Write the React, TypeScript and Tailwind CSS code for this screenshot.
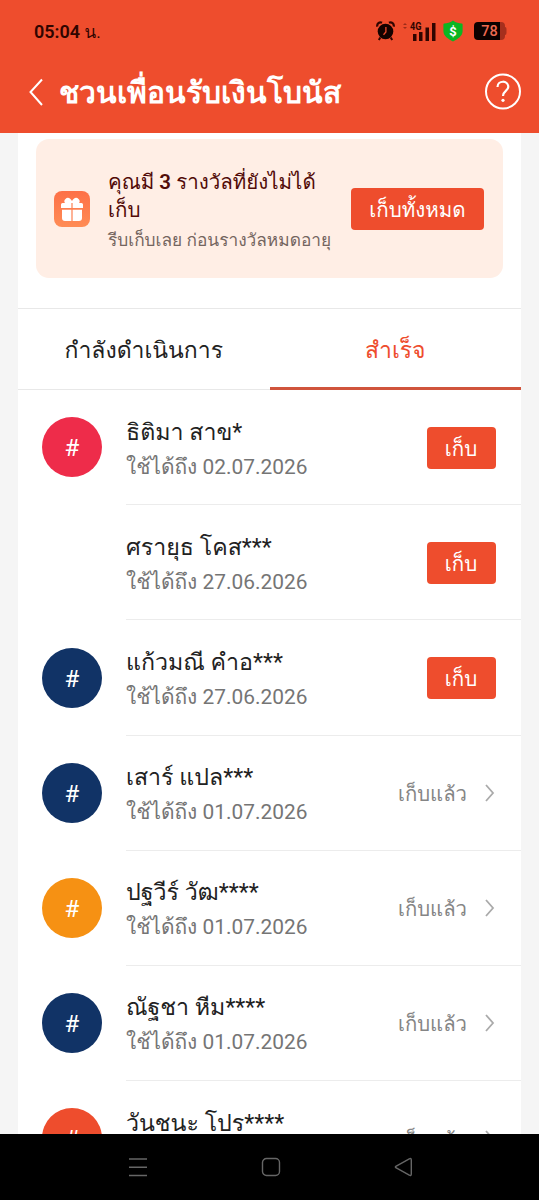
import type { ReactNode } from "react";

type Friend = {
  name: string;
  date: string;
  color: string | null;
  claimed: boolean;
};

const friends: Friend[] = [
  { name: "ธิติมา สาข*", date: "02.07.2026", color: "bg-[#ee2c4a]", claimed: false },
  { name: "ศรายุธ โคส***", date: "27.06.2026", color: null, claimed: false },
  { name: "แก้วมณี คำอ***", date: "27.06.2026", color: "bg-[#113366]", claimed: false },
  { name: "เสาร์ แปล***", date: "01.07.2026", color: "bg-[#113366]", claimed: true },
  { name: "ปฐวีร์ วัฒ****", date: "01.07.2026", color: "bg-[#f69113]", claimed: true },
  { name: "ณัฐชา หีม****", date: "01.07.2026", color: "bg-[#113366]", claimed: true },
  { name: "วันชนะ โปร****", date: "01.07.2026", color: "bg-[#ee4d2d]", claimed: true },
];

function StatusBar() {
  return (
    <div className="flex h-[50px] items-center pt-[14px] pl-[34px] text-[#300500]">
      <span className="w-[342px] text-[18px] leading-[24px] font-semibold">
        05:04 <span className="text-[17px] font-normal">น.</span>
      </span>
      <svg width="19" height="20" viewBox="0 0 19 20" className="mt-[-3px]">
        <circle cx="9.5" cy="10.5" r="7.800" fill="#140200" />
        <path d="M1.400 5.600A3.200 3.200 0 0 1 6 1.800M13 1.800A3.200 3.200 0 0 1 17.600 5.600" stroke="#300500" strokeWidth="2.200" fill="none" />
        <path d="M4.300 16.500l-1.500 2.500M14.700 16.500l1.500 2.500" stroke="#300500" strokeWidth="2" />
        <path d="M9.900 6v5l-2.400 2.700" stroke="#ee4d2d" strokeWidth="1.300" fill="none" />
      </svg>
      <svg width="35" height="20" viewBox="0 0 35 20" className="mt-[-3px] ml-[7px]">
        <path d="M1 4l2-2 2 2zM1 6l2 2 2-2z" fill="#9c2c1a" />
        <text x="8" y="8.500" fontSize="10" fontWeight="700" fontFamily="Roboto, sans-serif" fill="#300500" textLength="11.500" lengthAdjust="spacingAndGlyphs">4G</text>
        <path d="M11 13h3.500v7H11zM17 11h3.500v9H17zM23.500 6.500h3.500v13.500h-3.500zM30 2h3.500v18H30z" fill="#300500" />
      </svg>
      <svg width="20" height="22" viewBox="0 0 20 22" className="mt-[-3px] ml-[6px]">
        <path d="M10 .6C7 3 4 3.300 1.300 3.400Q.4 3.500.4 4.500V11c0 5 4.600 8 9.600 10.400C15 19 19.600 16 19.600 11V4.500q0-1-.9-1.100C16 3.300 13 3 10 .6z" fill="#0bb622" />
        <text x="10" y="15.500" fontSize="13" fontWeight="700" textAnchor="middle" fontFamily="Roboto, sans-serif" fill="#fff">$</text>
      </svg>
      <svg width="33" height="18" viewBox="0 0 33 18" className="mt-[-2px] ml-[11px]">
        <path d="M26 0h1a4 4 0 0 1 4 4v1q1.500 0 1.500 2v4q0 2-1.500 2v1a4 4 0 0 1-4 4h-1z" fill="#a52f1d" />
        <path d="M4 0h22v18H4a4 4 0 0 1-4-4V4a4 4 0 0 1 4-4z" fill="#0b0100" />
        <text x="15.500" y="14.200" fontSize="14.500" fontWeight="500" textAnchor="middle" fontFamily="Roboto, sans-serif" fill="#ee6a50">78</text>
      </svg>
    </div>
  );
}

function Header() {
  return (
    <header className="h-[133px] shrink-0 bg-[#ee4d2d] text-white">
      <StatusBar />
      <div className="flex h-[83px] items-center pr-[17px] pl-[28px]">
        <svg width="16" height="30" viewBox="0 0 16 30" fill="none" stroke="#fff" strokeWidth="2">
          <path d="M14 2.500L2.500 15 14 28" />
        </svg>
        <h1 className="ml-[15px] grow pt-[2px] font-[Roboto,serif] text-[30px] leading-[40px] font-bold whitespace-nowrap">ชวนเพื่อนรับเงินโบนัส</h1>
        <svg width="38" height="38" viewBox="0 0 38 38" fill="none" stroke="#fff" strokeWidth="2">
          <circle cx="19" cy="18.500" r="17" />
          <path d="M13.500 14C13.500 7 24.300 7 24.300 13.800C24.300 18 19 18 19 23" strokeWidth="2.200" />
          <circle cx="19" cy="27.300" r="1.600" fill="#fff" stroke="none" />
        </svg>
      </div>
    </header>
  );
}

function GiftIcon() {
  return (
    <svg width="36" height="36" viewBox="0 0 36 36" className="shrink-0">
      <defs>
        <linearGradient id="gift" x1="0" y1="0" x2="0" y2="1">
          <stop offset="0" stopColor="#fd7047" />
          <stop offset="1" stopColor="#ff8c55" />
        </linearGradient>
      </defs>
      <rect width="36" height="36" rx="8" fill="url(#gift)" />
      <path d="M8.500 12h19q1.500 0 1.500 1.500V17H7v-3.500Q7 12 8.500 12zM8 18.500h20V27q0 3-3 3H11q-3 0-3-3z" fill="#fff" />
      <path d="M18 12.500h-6.500a2.700 2.700 0 0 1 0-4.500c2-2.500 5-1 6.500 2 1.500-3 4.500-4.500 6.500-2a2.700 2.700 0 0 1 0 4.500z" fill="#fff" />
      <path d="M18 12v18M7 17.800h22" stroke="#fd8052" strokeWidth="1.200" />
    </svg>
  );
}

function Button({ className, children }: { className: string; children: ReactNode }) {
  return (
    <button className={"flex h-[42px] shrink-0 items-center justify-center rounded-[4px] bg-[#ee4d2d] pt-[2px] text-[20.500px] leading-[40px] whitespace-nowrap text-white " + className}>
      {children}
    </button>
  );
}

function RewardBanner() {
  return (
    <section className="mx-[18px] mt-[6px] flex h-[139px] shrink-0 items-center rounded-[13px] bg-[#ffeee5] pr-[19px] pl-[18px]">
      <GiftIcon />
      <div className="ml-[18px] grow pt-[3px]">
        <p className="text-[20.500px] leading-[28.500px] whitespace-nowrap text-[#520b08]">
          คุณมี <b className="font-semibold">3</b> รางวัลที่ยังไม่ได้
          <br />
          เก็บ
        </p>
        <p className="mt-[2px] text-[17.300px] leading-[26px] whitespace-nowrap text-[#74655f]">รีบเก็บเลย ก่อนรางวัลหมดอายุ</p>
      </div>
      <Button className="w-[133px]">เก็บทั้งหมด</Button>
    </section>
  );
}

function Tabs() {
  return (
    <nav className="mt-[30px] grid h-[82px] shrink-0 grid-cols-2 border-y border-[#e8e8e8] text-[23px]">
      <button className="pt-[5px] text-[#222222]">กำลังดำเนินการ</button>
      <button className="-mb-px border-b-[3px] border-[#d0543c] pt-[7px] text-[#ee4d2d]">สำเร็จ</button>
    </nav>
  );
}

function FriendRow({ friend }: { friend: Friend }) {
  return (
    <li className="flex h-[115.200px] shrink-0 pl-[24px]">
      <div className={"mt-[27.300px] flex size-[60px] shrink-0 items-center justify-center rounded-full pt-[2px] text-[24px] text-white " + (friend.color ?? "bg-transparent")}>
        {friend.color && "#"}
      </div>
      <div className="ml-[24px] flex grow border-b border-[#ececec]">
        <div className="grow pt-[23.500px]">
          <p className="h-[36px] text-[23.200px] leading-[36px] whitespace-nowrap text-[#222222]">{friend.name}</p>
          <p className="h-[34px] text-[20.900px] leading-[34px] whitespace-nowrap text-[#757575]">ใช้ได้ถึง {friend.date}</p>
        </div>
        {friend.claimed ? (
          <div className="mr-[26px] flex h-[115px] items-center text-[20.300px] leading-[30px] text-[#858585]">
            <span className="pt-[2px] whitespace-nowrap">เก็บแล้ว</span>
            <svg width="10" height="18" viewBox="0 0 10 18" fill="none" stroke="#aaa" strokeWidth="1.800" className="ml-[18px]">
              <path d="M1 1L8 9l-7 8" />
            </svg>
          </div>
        ) : (
          <Button className="mt-[36.500px] mr-[25.500px] w-[69px]">เก็บ</Button>
        )}
      </div>
    </li>
  );
}

function NavigationBar() {
  return (
    <footer className="flex h-[66px] shrink-0 items-center justify-between bg-black pr-[126px] pl-[128px]">
      <svg width="20" height="20" viewBox="0 0 20 20" stroke="#666" strokeWidth="1.400">
        <path d="M1 2h18M1 10.200h18M1 18.500h18" />
      </svg>
      <svg width="20" height="20" viewBox="0 0 20 20" fill="none" stroke="#666" strokeWidth="1.400">
        <rect x="1.500" y="1.500" width="17" height="17" rx="4" />
      </svg>
      <svg width="19" height="20" viewBox="0 0 19 20" fill="none" stroke="#666" strokeWidth="1.400" strokeLinejoin="round">
        <path d="M1.800 9.300L15.300 1.800Q17.300 1 17.300 3v14q0 2-2 1.200L1.800 10.700Q1 10 1.800 9.300z" />
      </svg>
    </footer>
  );
}

export default function App() {
  return (
    <div className="flex h-[1200px] w-[539px] flex-col overflow-hidden bg-[#f5f5f5] font-[Roboto,Loma,sans-serif]">
      <Header />
      <main className="mx-[18px] flex min-h-0 grow flex-col overflow-hidden bg-white">
        <RewardBanner />
        <Tabs />
        <ul>
          {friends.map((friend) => (
            <FriendRow key={friend.name} friend={friend} />
          ))}
        </ul>
      </main>
      <NavigationBar />
    </div>
  );
}
